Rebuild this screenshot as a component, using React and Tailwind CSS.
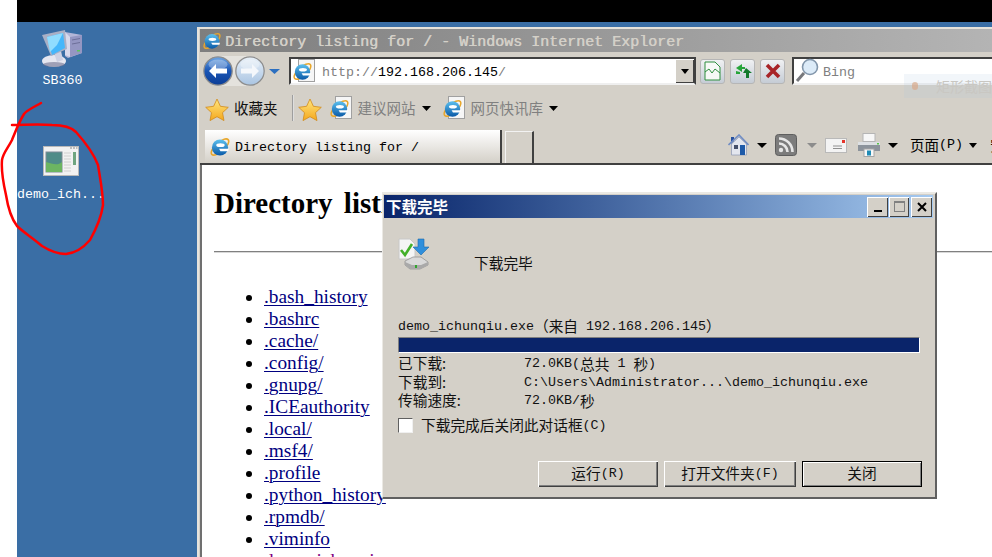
import React from "react";

const MONO = "font-['Liberation_Mono','Noto_Sans_CJK_SC',monospace]";
const ZH = "font-['Noto_Sans_CJK_SC',sans-serif]";

const files = [
  ".bash_history",
  ".bashrc",
  ".cache/",
  ".config/",
  ".gnupg/",
  ".ICEauthority",
  ".local/",
  ".msf4/",
  ".profile",
  ".python_history",
  ".rpmdb/",
  ".viminfo",
];

const Defs = () => (
  <svg className="absolute w-0 h-0" aria-hidden="true">
    <defs>
      <linearGradient id="ieBlue" x1="0" y1="0" x2="0" y2="1">
        <stop offset="0" stopColor="#5cc0ee" />
        <stop offset="1" stopColor="#0a5aa8" />
      </linearGradient>
      <linearGradient id="backBlue" x1="0" y1="0" x2="0" y2="1">
        <stop offset="0" stopColor="#6ea6e4" />
        <stop offset="0.5" stopColor="#1a55b4" />
        <stop offset="1" stopColor="#0b3d96" />
      </linearGradient>
      <linearGradient id="fwdBlue" x1="0" y1="0" x2="0" y2="1">
        <stop offset="0" stopColor="#e8f0f8" />
        <stop offset="1" stopColor="#a9c4e2" />
      </linearGradient>
      <linearGradient id="starFill" x1="0" y1="0" x2="0" y2="1">
        <stop offset="0" stopColor="#ffe680" />
        <stop offset="1" stopColor="#f5a81c" />
      </linearGradient>
    </defs>
  </svg>
);

function IeLogo({ size = 22 }) {
  return (
    <svg width={size} height={size} viewBox="0 0 24 24" className="shrink-0">
      <ellipse cx="12" cy="12" rx="12" ry="5" transform="rotate(-42 12 12)" fill="none" stroke="#e8a72c" strokeWidth="1.700" />
      <circle cx="12" cy="12.500" r="8.800" fill="url(#ieBlue)" />
      <ellipse cx="12.500" cy="10" rx="4.600" ry="2" fill="#fff" />
      <path d="M11 14h10.500l-.6 2.600H12.500z" fill="#fff" />
    </svg>
  );
}

function PageIe() {
  return (
    <div className="relative w-[23px] h-[24px] shrink-0">
      <div className="absolute right-0 top-0 w-[17px] h-[23px] bg-[#f6f6f6] border border-[#a0a0a0]" />
      <div className="absolute left-0 top-[2px]">
        <IeLogo size={21} />
      </div>
    </div>
  );
}

function Star({ size = 24 }) {
  return (
    <svg width={size} height={size} viewBox="0 0 24 24" className="shrink-0 mt-[3px]">
      <path d="M12 1l3.400 7.300 7.900 1-5.800 5.400 1.500 7.900L12 18.700l-7 3.900 1.500-7.900L.7 9.300l7.900-1z" fill="url(#starFill)" stroke="#d08a1c" strokeWidth="0.800" />
    </svg>
  );
}

function NavCircle({ fill, arrow, dir }) {
  return (
    <svg width="30" height="30" viewBox="0 0 30 30" className="shrink-0">
      <circle cx="15" cy="15" r="14.200" fill={fill} stroke="#8d8d8d" strokeWidth="1.300" />
      <ellipse cx="15" cy="8.500" rx="9.500" ry="5" fill="#fff" opacity="0.3" />
      <path d={dir === "left" ? "M6 15l7-7v4.500h11v5H13V22z" : "M24 15l-7-7v4.500H6v5h11V22z"} fill={arrow} />
    </svg>
  );
}

function Caret({ color = "#000", w = 9 }) {
  return (
    <svg width={w} height="5" viewBox="0 0 10 5" preserveAspectRatio="none" className="shrink-0">
      <path d="M0 0h10L5 5z" fill={color} />
    </svg>
  );
}

function ToolBtn({ children }) {
  return (
    <div className="w-[25px] h-[25px] rounded-[3px] border border-[#b6b6b6] bg-linear-to-b from-[#f0f1f3] to-[#c5ccd5] flex items-center justify-center shrink-0">
      {children}
    </div>
  );
}

function ComputerIcon() {
  return (
    <svg width="42" height="40" viewBox="0 0 42 40">
      <path d="M24 3l17 3v18l-14 5-3-2z" fill="#b3b6d8" />
      <path d="M29 8l12-2v18l-12 4z" fill="#9496c2" />
      <path d="M24 3l5 5v20l-5-2z" fill="#d8d9ec" />
      <path d="M31 11l8-1.500M31 15l8-1.500" stroke="#6d6f99" strokeWidth="1" />
      <rect x="36" y="21" width="3" height="1.500" fill="#58c45a" />
      <ellipse cx="13" cy="32" rx="12" ry="6" fill="#e6e7f0" />
      <ellipse cx="13" cy="35.500" rx="11" ry="2.500" fill="#6f7290" opacity="0.6" />
      <path d="M13 24l7-2 2 9-6 2z" fill="#cdd1e3" />
      <path d="M1 6l23-5 2 19-16 7z" fill="#a9b0c6" />
      <path d="M6 8l16-4 2 15-13 7z" fill="#45b7fb" />
      <path d="M6 8l16-4-6 12-7 7z" fill="#90ddff" />
    </svg>
  );
}

function AppIcon() {
  return (
    <svg width="36" height="30" viewBox="0 0 36 30">
      <rect x="0.500" y="0.500" width="35" height="29" fill="#f2f2f2" stroke="#b9b9b9" />
      <rect x="3" y="6" width="16" height="20" fill="#4f8c88" stroke="#7d8a96" />
      <path d="M3 26V16c6 2 12 4 16 0v10z" fill="#6cb561" />
      <rect x="30" y="6" width="3" height="13" fill="#6fa57f" />
      <path d="M21 7h7M21 10h7M21 13h7M21 16h7M21 19h7M21 22h7M21 25h7" stroke="#cfcfcf" strokeWidth="1.200" />
      <path d="M27 2h2M30 2h2M33 2h1.500" stroke="#8a8a8a" />
    </svg>
  );
}

function DownloadIcon() {
  return (
    <svg width="32" height="32" viewBox="0 0 32 32" className="shrink-0">
      <path d="M1 1h11l5 5v15H1z" fill="#f5f5f5" stroke="#c8c8c8" />
      <path d="M3 12l4 5 7-11" fill="none" stroke="#43b02a" strokeWidth="2.600" />
      <path d="M20 1h6v8h5l-8 8-8-8h5z" fill="#2f8fdc" stroke="#1b69ad" strokeWidth="0.600" />
      <path d="M7 23l8-4h8l7 5v3l-8 4H12l-5-4z" fill="#d9d9d9" stroke="#8a8a8a" strokeWidth="0.700" />
      <path d="M7 24l7 3h9l7-3v3l-8 4H12l-5-4z" fill="#a9a9a9" />
      <rect x="17" y="27" width="2" height="3" fill="#2fa52f" />
    </svg>
  );
}

function HomeIcon() {
  return (
    <svg width="21" height="22" viewBox="0 0 21 22" className="shrink-0">
      <path d="M3 3h3v4l-3 3z" fill="#25509f" />
      <path d="M3.500 10v11h15V10l-7.500-7z" fill="#e3e6ee" stroke="#8b97b3" strokeWidth="0.700" />
      <path d="M0.500 11L11 1l9.500 10" fill="none" stroke="#6f8cc4" strokeWidth="1.600" />
      <rect x="6" y="11" width="4" height="4" fill="#46506a" />
      <rect x="12" y="11" width="5" height="10" fill="#1e5aa8" />
    </svg>
  );
}

function RssIcon() {
  return (
    <svg width="22" height="22" viewBox="0 0 22 22" className="shrink-0">
      <rect x="0.500" y="0.500" width="21" height="21" rx="3" fill="#7c7c7c" stroke="#5e5e5e" />
      <circle cx="6" cy="16" r="2.200" fill="#e6e6e6" />
      <path d="M4 9.500a8.500 8.500 0 0 1 8.500 8.500M4 4.500A13.500 13.500 0 0 1 17.500 18" fill="none" stroke="#e6e6e6" strokeWidth="2.600" />
    </svg>
  );
}

function MailIcon() {
  return (
    <svg width="22" height="15" viewBox="0 0 22 15" className="shrink-0">
      <rect x="0.500" y="0.500" width="21" height="14" fill="#f3f3f3" stroke="#b9b9b9" />
      <rect x="17" y="2" width="3" height="3" fill="#e5352b" />
      <path d="M8 8h9M8 10.500h9" stroke="#8f8f8f" />
    </svg>
  );
}

function PrinterIcon() {
  return (
    <svg width="24" height="24" viewBox="0 0 24 24" className="shrink-0">
      <rect x="6" y="0.500" width="12" height="8" fill="#f7f7f7" stroke="#b5b5b5" />
      <path d="M1 9h22v9H1z" fill="#8c939b" />
      <path d="M1 9h22v3H1z" fill="#dde0e3" />
      <rect x="20" y="10" width="2" height="1.500" fill="#57c34a" />
      <rect x="7" y="16" width="10" height="7.500" fill="#f7f7f7" stroke="#a5a5a5" />
      <rect x="10" y="17.500" width="4" height="5" fill="#1f8bb5" />
    </svg>
  );
}

// raised win2k style button
function DlgButton({ children, w, def }) {
  return (
    <div
      className={`${w} h-[26px] bg-[#d4d0c8] flex items-center justify-center ${
        def
          ? "border border-black shadow-[inset_1px_1px_0_#fff,inset_-1px_-1px_0_#808080]"
          : "shadow-[inset_1px_1px_0_#fff,inset_-1px_-1px_0_#404040,inset_-2px_-2px_0_#808080]"
      }`}
    >
      {children}
    </div>
  );
}

function CapBtn({ children, w = "w-[21px]" }) {
  return (
    <div className={`${w} h-[20px] bg-[#d4d0c8] flex items-center justify-center shadow-[inset_1px_1px_0_#fff,inset_-1px_-1px_0_#404040] shrink-0`}>
      {children}
    </div>
  );
}

function Row({ label, children }) {
  return (
    <div className="flex h-[18.500px] items-center text-[#111]">
      <div className={`w-[126px] pb-[2px] text-[14.700px] ${ZH}`}>{label}</div>
      <div className={`${MONO} text-[13.330px] whitespace-pre flex items-center`}>{children}</div>
    </div>
  );
}

function Desktop() {
  return (
    <div className="w-[180px] shrink-0 h-full bg-[#3a6ea5] pt-[7px] text-white">
      <div className={`w-[90px] flex flex-col items-center ${MONO} text-[13.330px]`}>
        <ComputerIcon />
        <div className="mt-[2px] h-[20px] leading-[20px] pl-[1px]">SB360</div>
        <div className="mt-[55px] -ml-[2px]">
          <AppIcon />
        </div>
        <div className="mt-[9px] -ml-[2px] h-[20px] leading-[20px]">demo_ich...</div>
      </div>
    </div>
  );
}

function Browser() {
  return (
    <div className="flex-1 min-w-0 h-full pt-[5px] flex flex-col overflow-hidden bg-[#3a6ea5]">
      <div className="flex-1 min-h-0 flex flex-col bg-[#d4d0c8] border-l-2 border-t-2 border-[#e6e3dc] pl-[1px]">
        <div className={`h-[23px] shrink-0 flex items-center gap-[3px] pl-[2px] bg-linear-to-r from-[#7e7e7e] to-[#b4b4b4] text-[#d4d0c8] text-[15px] ${MONO} whitespace-nowrap`}>
          <IeLogo size={20} />
          <span className="pt-[5px] [text-shadow:0.4px_0_0_#d4d0c8]">Directory listing for / - Windows Internet Explorer</span>
        </div>

        <div className="h-[37px] shrink-0 flex items-center pl-[3px] pt-[1px]">
          <div className="flex items-center gap-[2px] bg-[#e4e2dd] rounded-full">
            <NavCircle fill="url(#backBlue)" arrow="#fff" dir="left" />
            <NavCircle fill="url(#fwdBlue)" arrow="#f4f7fb" dir="right" />
          </div>
          <div className="ml-[4px]">
            <Caret color="#2c6fc0" w={11} />
          </div>
          <div className="ml-[9px] w-[407px] h-[28px] shrink-0 bg-white border-2 border-t-[#404040] border-l-[#404040] border-r-[#404040] border-b-[#efefef] flex items-center pl-[1px] text-[13.330px]">
            <PageIe />
            <span className={`ml-[7px] pt-[3px] ${MONO}`}>
              <span className="text-[#808080]">http://</span>192.168.206.145<span className="text-[#808080]">/</span>
            </span>
            <div className="ml-auto w-[19px] h-full bg-[#d4d0c8] flex items-center justify-center shadow-[inset_1px_1px_0_#fff,inset_-1px_-1px_0_#404040]">
              <Caret w={8} />
            </div>
          </div>
          <div className="ml-[4px] flex gap-[5px]">
            <ToolBtn>
              <svg width="17" height="20" viewBox="0 0 17 20">
                <path d="M1 1h10l5 5v13H1z" fill="#f7f9f7" stroke="#2f8f3f" />
                <path d="M1 11l4-3 3 4 3-4 5 4" fill="none" stroke="#2f8f3f" />
              </svg>
            </ToolBtn>
            <ToolBtn>
              <svg width="20" height="18" viewBox="0 0 20 18">
                <path d="M9 2L3 6l6 4V7h3V5H9z" fill="#27a53a" />
                <path d="M13 6l6 5h-3v5h-3v-5h-3z" fill="#137a2c" />
                <path d="M3 9v3h4v-2z" fill="#27a53a" />
              </svg>
            </ToolBtn>
            <ToolBtn>
              <svg width="16" height="16" viewBox="0 0 16 16">
                <path d="M2 2l12 12M14 2L2 14" stroke="#a82428" strokeWidth="3.600" />
              </svg>
            </ToolBtn>
          </div>
          <div className="ml-[7px] flex-1 h-[28px] bg-white border-2 border-t-[#404040] border-l-[#404040] border-r-0 border-b-[#efefef] flex items-center pl-[1px]">
            <svg width="24" height="26" viewBox="0 0 24 26" className="shrink-0">
              <circle cx="15" cy="9" r="7.500" fill="#dcebf8" stroke="#8296ab" strokeWidth="1.600" />
              <path d="M9 15l-7 8" stroke="#77787c" strokeWidth="3" />
            </svg>
            <span className={`ml-[4px] pt-[3px] text-[13.330px] text-[#808080] ${MONO}`}>Bing</span>
          </div>
        </div>

        <div className="h-[36px] shrink-0 flex items-center pl-[5px] pt-[2px]">
          <Star />
          <span className={`ml-[5px] text-[14.500px] text-[#111] ${ZH}`}>收藏夹</span>
          <div className="ml-[14px] w-[2px] h-[26px] bg-linear-to-r from-[#808080] to-white" />
          <div className="ml-[4px]">
            <Star />
          </div>
          <div className="ml-[7px]">
            <PageIe />
          </div>
          <span className={`ml-[6px] text-[14.500px] text-[#808080] ${ZH}`}>建议网站</span>
          <div className="ml-[6px]">
            <Caret />
          </div>
          <div className="ml-[11px]">
            <PageIe />
          </div>
          <span className={`ml-[6px] text-[14.500px] text-[#808080] ${ZH}`}>网页快讯库</span>
          <div className="ml-[6px]">
            <Caret />
          </div>
        </div>

        <div className="h-[40px] shrink-0 flex items-end pl-[5px] border-b-2 border-[#404040] whitespace-nowrap">
          <div className="w-[297px] h-[33px] shrink-0 bg-linear-to-b from-white to-[#d4d0c8] border-r-2 border-[#404040] flex items-center pl-[4px] gap-[4px]">
            <IeLogo size={22} />
            <span className={`pt-[2px] text-[13.330px] text-black ${MONO}`}>Directory listing for /</span>
          </div>
          <div className="ml-[3px] w-[29px] h-[32px] shrink-0 border-l border-t border-[#f2f2f2] border-r-2 border-r-[#404040]" />
          <div className="ml-auto flex items-center h-[33px] w-[264px] shrink-0 pb-[3px]">
            <HomeIcon />
            <div className="ml-[8px]">
              <Caret w={10} />
            </div>
            <div className="ml-[8px]">
              <RssIcon />
            </div>
            <div className="ml-[10px]">
              <Caret color="#8c8c8c" w={10} />
            </div>
            <div className="ml-[8px]">
              <MailIcon />
            </div>
            <div className="ml-[10px]">
              <PrinterIcon />
            </div>
            <div className="ml-[7px]">
              <Caret w={10} />
            </div>
            <span className={`ml-[12px] text-[14.500px] text-black shrink-0 ${ZH}`}>页面</span>
            <span className={`text-[13.330px] text-black shrink-0 ${MONO}`}>(P)</span>
            <div className="ml-[6px]">
              <Caret w={8} />
            </div>
            <span className={`ml-[13px] text-[14.500px] text-black shrink-0 ${ZH}`}>安</span>
          </div>
        </div>

        <div className="flex-1 min-h-0 overflow-hidden bg-white border-l-2 border-[#707070] pl-[12px] pt-[20px] font-['Liberation_Serif',serif] text-black">
          <h1 className="text-[29px] leading-[37px] font-bold whitespace-nowrap [word-spacing:4px]">Directory listing for /</h1>
          <hr className="mt-[29px] h-[2px] border-0 border-t border-b border-t-[#808080] border-b-[#d8d8d8] -mr-[100px]" />
          <ul className="mt-[33px] pl-[50px] list-disc text-[19.330px] leading-[22px]">
            {files.map((f) => (
              <li key={f}>
                <a className="underline text-[#000080] decoration-1 underline-offset-[2px]">{f}</a>
              </li>
            ))}
            <li>
              <a className="underline text-[#800080] decoration-1 underline-offset-[2px]">demo_ichunqiu.exe</a>
            </li>
          </ul>
        </div>
      </div>
    </div>
  );
}

function Dialog() {
  return (
    <div className="absolute left-[382px] top-[192px] w-[555px] h-[307px] bg-[#d4d0c8] border-2 border-l-1 border-t-[#ebe9e4] border-l-[#ebe9e4] border-r-[#606060] border-b-[#606060] pt-[1px] pl-[1px] pr-[2px] pb-[1px] flex flex-col">
      <div className="h-[23px] shrink-0 bg-linear-to-r from-[#0a246a] to-[#a6caf0] flex items-center pl-[2px] pr-[1px]">
        <span className={`text-white text-[15.500px] font-bold ${ZH}`}>下载完毕</span>
        <div className="ml-auto flex">
          <CapBtn>
            <div className="mt-[9px] w-[8px] h-[2px] bg-black" />
          </CapBtn>
          <div className="w-[1px]" />
          <CapBtn w="w-[20px]">
            <div className="w-[11px] h-[11px] border border-[#808080] border-t-2" />
          </CapBtn>
          <div className="w-[2px]" />
          <CapBtn>
            <svg width="10" height="10" viewBox="0 0 10 10">
              <path d="M1 1l8 8M9 1L1 9" stroke="#000" strokeWidth="2" />
            </svg>
          </CapBtn>
        </div>
      </div>

      <div className="flex-1 flex flex-col pl-[14px] pr-[13px] pt-[20px]">
        <div className="flex h-[32px] items-start">
          <DownloadIcon />
          <span className={`ml-[44px] mt-[15px] text-[14.700px] leading-[20px] text-[#111] ${ZH}`}>下载完毕</span>
        </div>
        <div className={`mt-[46px] h-[20px] flex items-center text-[#111] ${MONO} text-[13.330px] whitespace-pre`}>
          <span className="pt-[1px]">demo_ichunqiu.exe</span>
          <span className={`text-[14.700px] ${ZH}`}>（来自</span>
          <span className="pt-[1px]"> 192.168.206.145</span>
          <span className={`text-[14.700px] ${ZH}`}>）</span>
        </div>
        <div className="mt-[1px] h-[16px] bg-[#0a246a] border border-t-[#808080] border-l-[#808080] border-r-white border-b-white" />
        <div className="mt-[2px]">
          <Row label="已下载:">
            72.0KB(<span className={`text-[14.700px] ${ZH}`}>总共</span> 1 <span className={`text-[14.700px] ${ZH}`}>秒</span>)
          </Row>
          <Row label="下载到:">C:\Users\Administrator...\demo_ichunqiu.exe</Row>
          <Row label="传输速度:">
            72.0KB/<span className={`text-[14.700px] ${ZH}`}>秒</span>
          </Row>
        </div>
        <div className="mt-[6px] flex items-center h-[18px]">
          <div className="w-[15px] h-[15px] bg-white border border-t-[#606060] border-l-[#606060] border-r-[#f0f0f0] border-b-[#f0f0f0]" />
          <span className={`ml-[8px] text-[14.700px] text-[#111] ${ZH}`}>下载完成后关闭此对话框</span>
          <span className={`text-[13.330px] text-[#111] ${MONO}`}>(C)</span>
        </div>
        <div className="mt-[26px] -mr-[2px] flex justify-end gap-[6px]">
          <DlgButton w="w-[120px]">
            <span className={`text-[14.700px] text-[#111] ${ZH}`}>运行</span>
            <span className={`text-[13.330px] text-[#111] ${MONO}`}>(R)</span>
          </DlgButton>
          <DlgButton w="w-[132px]">
            <span className={`text-[14.700px] text-[#111] ${ZH}`}>打开文件夹</span>
            <span className={`text-[13.330px] text-[#111] ${MONO}`}>(F)</span>
          </DlgButton>
          <DlgButton w="w-[120px]" def>
            <span className={`text-[14.700px] text-[#111] ${ZH}`}>关闭</span>
          </DlgButton>
        </div>
      </div>
    </div>
  );
}

export default function App() {
  return (
    <div className="relative w-[992px] h-[557px] overflow-hidden bg-white flex">
      <Defs />
      <div className="w-[17px] shrink-0" />
      <div className="flex-1 min-w-0 flex flex-col">
        <div className="h-[22px] shrink-0 bg-black" />
        <div className="flex-1 min-h-0 flex">
          <Desktop />
          <Browser />
        </div>
      </div>

      {/* hand drawn ring round the file */}
      <svg className="absolute left-0 top-0 pointer-events-none" width="120" height="270" viewBox="0 0 120 270" fill="none">
        <path
          d="M41 103C34 107 27 110 24 114C19 122 16 130 12 140C8 148 3 153 2 160C1 172 3 182 6 195C8 208 11 218 17 226C23 232 33 238 42 246C50 251 57 254 66 254C76 253 84 247 90 240C95 231 101 220 103 205C103 192 100 178 98 165C93 152 85 142 76 132C70 126 62 125 52 125C38 124 24 125 12 125"
          stroke="#ff0000"
          strokeWidth="2.500"
          strokeLinecap="round"
        />
      </svg>

      {/* faded screenshot tool hint */}
      <div className="absolute left-[904px] top-[74px] w-[88px] h-[24px] bg-[#a9c4dc]/15 flex items-center pl-[8px]">
        <div className="w-[8px] h-[8px] rounded-full bg-[#d9a98a]/70" />
        <span className={`ml-[18px] text-[14px] text-[#c9c7c2] whitespace-nowrap ${ZH}`}>矩形截图</span>
      </div>

      <Dialog />
    </div>
  );
}
